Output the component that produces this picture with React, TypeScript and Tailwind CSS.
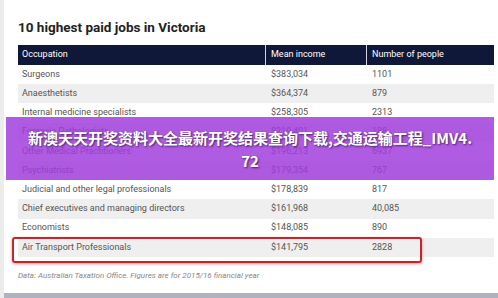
import React from "react";

const rows: [string, string, string][] = [
  ["Surgeons", "$383,034", "1101"],
  ["Anaesthetists", "$364,374", "879"],
  ["Internal medicine specialists", "$258,305", "2313"],
  ["Forensic Pathologists", "$219,401", "188"],
  ["Other Medical Practitioners", "$196,213", "6937"],
  ["Psychiatrists", "$179,354", "767"],
  ["Judicial and other legal professionals", "$178,839", "817"],
  ["Chief executives and managing directors", "$161,968", "40,085"],
  ["Economists", "$148,085", "890"],
  ["Air Transport Professionals", "$141,795", "2828"],
];

export default function App() {
  return (
    <div
      className="relative w-[498px] h-[298px] overflow-hidden bg-white border-l-[4px] border-[#ececec]"
      style={{ fontFamily: "Roboto, 'Noto Sans', sans-serif" }}
    >
      <div className="pl-[14px] pr-[4px]">
        <div className="h-[45px] pt-[17px]">
          <h1 className="text-[13.5px] leading-[20px] font-bold text-[#222]">
            10 highest paid jobs in Victoria
          </h1>
        </div>
        <div className="w-[476px]">
          <div className="flex h-[20px] items-center bg-[#0f1838] text-[9px] text-white">
            <div className="w-[247px] pl-[4px] h-full flex items-center">Occupation</div>
            <div className="w-[101px] pl-[5px] h-full flex items-center border-l border-[#cfd3dc]">Mean income</div>
            <div className="flex-1 pl-[5px] h-full flex items-center border-l border-[#cfd3dc]">Number of people</div>
          </div>
          {rows.map((r, i) => (
            <div
              key={i}
              className={`flex h-[19.2px] items-center text-[9px] text-[#555] ${i % 2 === 1 ? "bg-[#efefef]" : "bg-white"}`}
            >
              <div className="w-[247px] pl-[4px]">{r[0]}</div>
              <div className="w-[101px] pl-[6px]">{r[1]}</div>
              <div className="flex-1 pl-[6px]">{r[2]}</div>
            </div>
          ))}
        </div>
        <div className="mt-[13px] text-[8px] italic text-[#888]">
          Data: Australian Taxation Office. Figures are for 2015/16 financial year
        </div>
      </div>

      <div className="absolute left-[8px] top-[237px] w-[410px] h-[26px] rounded-[3px] border-2 border-[#c4262c] shadow-[0_1px_3px_rgba(180,40,40,0.5)]" />

      <div className="absolute left-[2px] w-[488px] top-[117px] h-[63px] bg-[rgba(160,60,220,0.84)] flex flex-col items-center justify-center">
        <div
          className="text-white font-bold text-[15px] leading-[23px] text-center"
          style={{
            fontFamily: "'Noto Sans CJK SC', 'Noto Sans', sans-serif",
            textShadow: "1px 1px 2px rgba(0,0,0,0.6)",
          }}
        >
          新澳天天开奖资料大全最新开奖结果查询下载,交通运输工程_IMV4.
          <br />
          72
        </div>
      </div>

      <div className="absolute left-0 right-0 bottom-0 h-[5px] bg-[#aeb3bd]" />
    </div>
  );
}
